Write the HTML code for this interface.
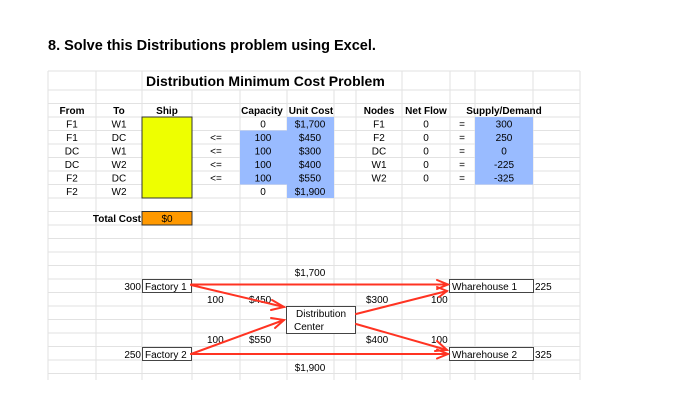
<!DOCTYPE html>
<html><head><meta charset="utf-8"><style>
html,body{margin:0;padding:0;background:#fff;width:689px;height:403px;overflow:hidden}
svg{display:block;font-family:"Liberation Sans",Arial,sans-serif}
</style></head><body>
<svg width="689" height="403" viewBox="0 0 689 403" xmlns="http://www.w3.org/2000/svg">
<text x="48" y="50" font-size="14.5" font-weight="bold" fill="#000">8. Solve this Distributions problem using Excel.</text>
<!-- grid -->
<g stroke="#e2e2e2" stroke-width="1">
<line x1="48" y1="71" x2="580" y2="71"/>
<line x1="48" y1="90" x2="580" y2="90"/><line x1="48" y1="103.5" x2="580" y2="103.5"/><line x1="48" y1="117" x2="580" y2="117"/><line x1="48" y1="130.5" x2="580" y2="130.5"/><line x1="48" y1="144" x2="580" y2="144"/><line x1="48" y1="157.5" x2="580" y2="157.5"/><line x1="48" y1="171" x2="580" y2="171"/><line x1="48" y1="184.5" x2="580" y2="184.5"/><line x1="48" y1="198" x2="580" y2="198"/><line x1="48" y1="211.5" x2="580" y2="211.5"/><line x1="48" y1="225" x2="580" y2="225"/><line x1="48" y1="238.5" x2="580" y2="238.5"/><line x1="48" y1="252" x2="580" y2="252"/><line x1="48" y1="265.5" x2="580" y2="265.5"/><line x1="48" y1="279" x2="580" y2="279"/><line x1="48" y1="292.5" x2="580" y2="292.5"/><line x1="48" y1="306" x2="580" y2="306"/><line x1="48" y1="319.5" x2="580" y2="319.5"/><line x1="48" y1="333" x2="580" y2="333"/><line x1="48" y1="346.5" x2="580" y2="346.5"/><line x1="48" y1="360" x2="580" y2="360"/><line x1="48" y1="373.5" x2="580" y2="373.5"/>
<line x1="48" y1="71" x2="48" y2="380"/><line x1="96" y1="71" x2="96" y2="380"/><line x1="142" y1="71" x2="142" y2="380"/>
<line x1="192" y1="90" x2="192" y2="380"/><line x1="240" y1="90" x2="240" y2="380"/><line x1="287" y1="90" x2="287" y2="380"/><line x1="334" y1="90" x2="334" y2="380"/><line x1="356" y1="90" x2="356" y2="380"/><line x1="402" y1="71" x2="402" y2="380"/><line x1="450" y1="71" x2="450" y2="380"/><line x1="475" y1="71" x2="475" y2="380"/><line x1="533" y1="71" x2="533" y2="380"/><line x1="580" y1="71" x2="580" y2="380"/>
</g>
<!-- fills -->
<rect x="240" y="130.5" width="47" height="54" fill="#99bbff"/>
<rect x="287" y="117" width="47" height="81" fill="#99bbff"/>
<rect x="475" y="117" width="58" height="67.5" fill="#99bbff"/>
<rect x="142" y="117" width="50" height="81" fill="#eeff00" stroke="#333" stroke-width="1"/>
<rect x="142" y="211.5" width="50" height="13.5" fill="#ff9900" stroke="#333" stroke-width="1"/>
<rect x="143" y="72" width="258" height="17.5" fill="#fff"/>
<text x="146" y="86" font-size="14" font-weight="bold">Distribution Minimum Cost Problem</text>
<g font-size="10" text-anchor="middle">
<g font-weight="bold"><text x="72" y="114">From</text><text x="119" y="114">To</text><text x="167" y="114">Ship</text><text x="262" y="114">Capacity</text><text x="311" y="114">Unit Cost</text><text x="379" y="114">Nodes</text><text x="426" y="114">Net Flow</text><text x="504" y="114">Supply/Demand</text></g>
<text x="72" y="127.5">F1</text><text x="72" y="141">F1</text><text x="72" y="154.5">DC</text><text x="72" y="168">DC</text><text x="72" y="181.5">F2</text><text x="72" y="195">F2</text>
<text x="119" y="127.5">W1</text><text x="119" y="141">DC</text><text x="119" y="154.5">W1</text><text x="119" y="168">W2</text><text x="119" y="181.5">DC</text><text x="119" y="195">W2</text>
<text x="216" y="141">&lt;=</text><text x="216" y="154.5">&lt;=</text><text x="216" y="168">&lt;=</text><text x="216" y="181.5">&lt;=</text>
<text x="263" y="127.5">0</text><text x="263" y="141">100</text><text x="263" y="154.5">100</text><text x="263" y="168">100</text><text x="263" y="181.5">100</text><text x="263" y="195">0</text>
<text x="310" y="127.5">$1,700</text><text x="310" y="141">$450</text><text x="310" y="154.5">$300</text><text x="310" y="168">$400</text><text x="310" y="181.5">$550</text><text x="310" y="195">$1,900</text>
<text x="379" y="127.5">F1</text><text x="379" y="141">F2</text><text x="379" y="154.5">DC</text><text x="379" y="168">W1</text><text x="379" y="181.5">W2</text>
<text x="426" y="127.5">0</text><text x="426" y="141">0</text><text x="426" y="154.5">0</text><text x="426" y="168">0</text><text x="426" y="181.5">0</text>
<text x="462" y="127.5">=</text><text x="462" y="141">=</text><text x="462" y="154.5">=</text><text x="462" y="168">=</text><text x="462" y="181.5">=</text>
<text x="504" y="127.5">300</text><text x="504" y="141">250</text><text x="504" y="154.5">0</text><text x="504" y="168">-225</text><text x="504" y="181.5">-325</text>
<text x="167" y="222">$0</text>
<text x="310" y="276">$1,700</text><text x="310" y="371">$1,900</text>
</g>
<text x="141" y="222" font-size="10" font-weight="bold" text-anchor="end">Total Cost</text>
<!-- diagram boxes -->
<g font-size="10" fill="#000">
<rect x="142.5" y="279.5" width="49" height="13" fill="#fff" stroke="#444"/>
<text x="145" y="290">Factory 1</text>
<rect x="142.5" y="347.5" width="49" height="13" fill="#fff" stroke="#444"/>
<text x="145" y="358">Factory 2</text>
<rect x="286.5" y="306.5" width="69" height="27" fill="#fff" stroke="#444"/>
<text x="296" y="317">Distribution</text><text x="294" y="330">Center</text>
<rect x="449.5" y="279.5" width="84" height="13" fill="#fff" stroke="#444"/>
<text x="452" y="290">Wharehouse 1</text>
<rect x="449.5" y="347.5" width="84" height="13" fill="#fff" stroke="#444"/>
<text x="452" y="358">Wharehouse 2</text>
<text x="141" y="290" text-anchor="end">300</text><text x="141" y="358" text-anchor="end">250</text>
<text x="535" y="290">225</text><text x="535" y="358">325</text>
<text x="207" y="303">100</text><text x="249" y="303">$450</text>
<text x="207" y="343">100</text><text x="249" y="343">$550</text>
<text x="366" y="303">$300</text><text x="366" y="343">$400</text>
<text x="431" y="303">100</text><text x="431" y="343">100</text>
</g>
<!-- arrows -->
<g stroke="#ff3322" stroke-width="2" fill="none" stroke-linecap="round">
<line x1="191" y1="284.5" x2="448" y2="284.5"/><polyline points="437,280 448,284.5 437,289"/>
<line x1="191" y1="285" x2="284" y2="307"/><polyline points="272,300 284,307 271,310"/>
<line x1="191" y1="354" x2="284" y2="320"/><polyline points="271,318 284,320 275,328"/>
<line x1="356" y1="314" x2="447" y2="291"/><polyline points="437,287 447,291 439,297"/>
<line x1="356" y1="324" x2="447" y2="350"/><polyline points="437,341 447,350 435,351"/>
<line x1="191" y1="354" x2="448" y2="354"/><polyline points="437,349.5 448,354 437,358.5"/>
</g>
</svg>
</body></html>
